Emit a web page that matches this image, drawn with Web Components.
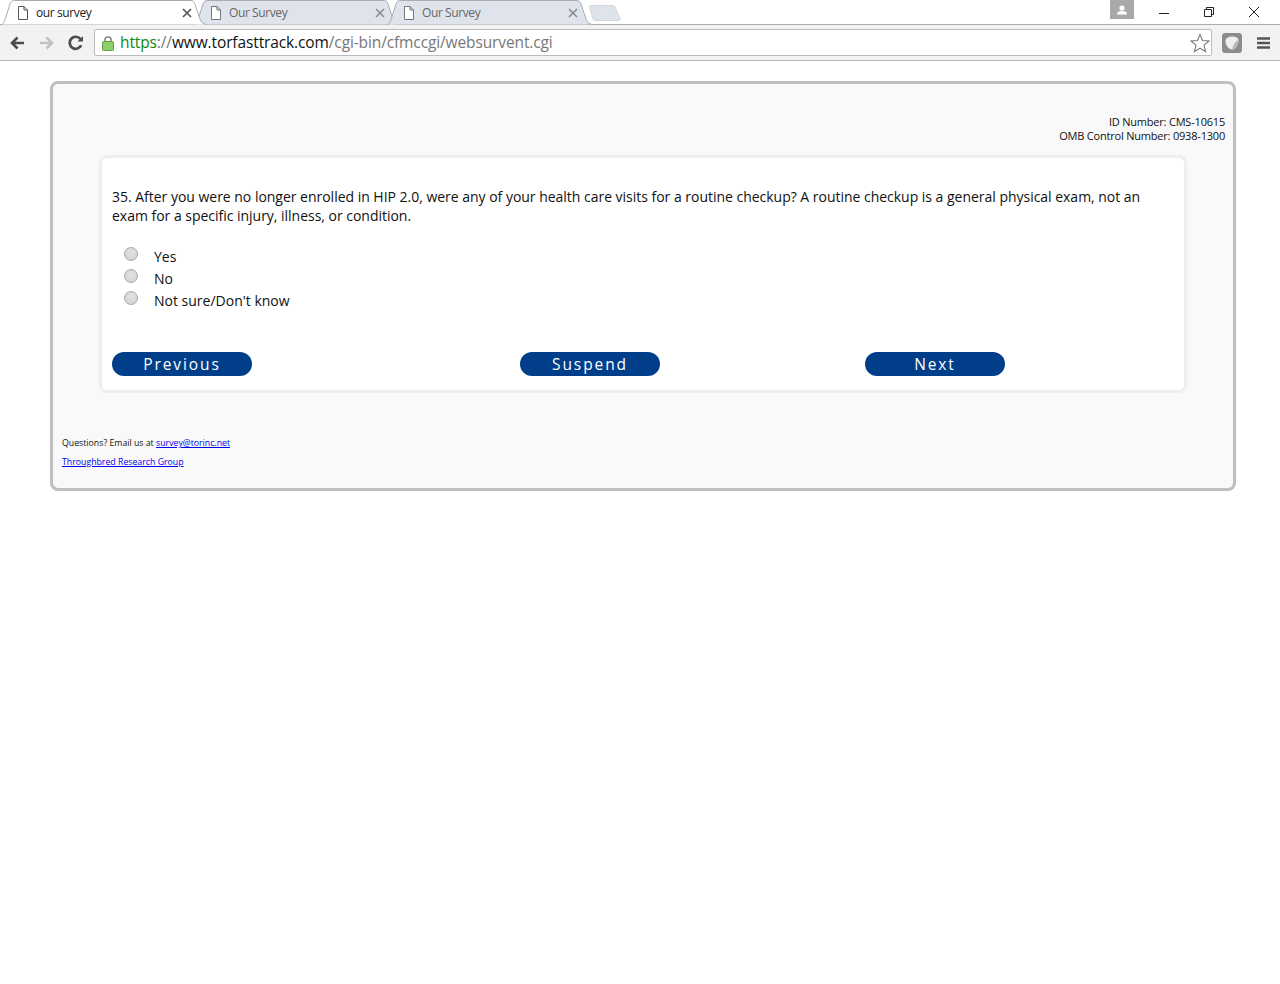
<!DOCTYPE html>
<html>
<head>
<meta charset="utf-8">
<title>our survey</title>
<style>
html, body { margin: 0; padding: 0; background: #fff; }
</style>
</head>
<body>
<browser-chrome>
	<browser-tab active label="our survey"></browser-tab>
	<browser-tab label="Our Survey"></browser-tab>
	<browser-tab label="Our Survey"></browser-tab>
</browser-chrome>
<survey-page>
	<span slot="id">ID Number: CMS-10615</span>
	<span slot="omb">OMB Control Number: 0938-1300</span>
	<survey-question>
		<span slot="text">35. After you were no longer enrolled in HIP 2.0, were any of your health care visits for a routine checkup? A routine checkup is a general physical exam, not an exam for a specific injury, illness, or condition.</span>
		<survey-option>Yes</survey-option>
		<survey-option>No</survey-option>
		<survey-option>Not sure/Don't know</survey-option>
		<survey-button slot="nav">Previous</survey-button>
		<survey-button slot="nav" style="margin-left:268px">Suspend</survey-button>
		<survey-button slot="nav" style="margin-left:205px">Next</survey-button>
	</survey-question>
</survey-page>
<script>
class BrowserTab extends HTMLElement {
	constructor(){
		super();
		this.attachShadow({mode: "open"});
	}
	connectedCallback(){
		const active = this.hasAttribute("active");
		const fill = active ? "#ffffff" : "#dfe4ec";
		const label = this.getAttribute("label");
		this.shadowRoot.innerHTML = `
			<style>
				:host {
					display: block;
					position: relative;
					width: 207px;
					height: 24px;
					margin-right: -14px;
					z-index: ${active ? 2 : 1};
				}
				svg.shape { position: absolute; left: 0; top: 0; }
				.inner {
					position: relative;
					display: flex;
					align-items: center;
					height: 24px;
					padding: 1px 15px 0 17px;
					box-sizing: border-box;
					font: 12px "Open Sans", "Noto Sans", sans-serif;
					color: ${active ? "#222" : "#666"};
				}
				.doc { margin-right: 7px; flex: none; }
				.label { flex: 1; white-space: nowrap; overflow: hidden; letter-spacing: -0.4px; }
				.close { flex: none; }
			</style>
			<svg class="shape" width="207" height="25" viewBox="0 0 207 25">
				<path d="M0.5 24.5 C4 24.5 4 22 5.5 18 L10 4 C11 1.5 12 0.5 15 0.5 L190 0.5 C193 0.5 194 1.5 195 4 L200 19 C201 22 203 24 206.5 24.5"
					fill="${fill}" stroke="#a9acb0"/>
			</svg>
			<div class="inner">
				<svg class="doc" width="12" height="14" viewBox="0 0 12 14">
					<path d="M1.5 0.5 H7 L10.5 4 V13.5 H1.5 Z M7 0.5 V4 H10.5" fill="#fff" stroke="${active ? "#555" : "#777"}"/>
				</svg>
				<span class="label">${label}</span>
				<svg class="close" width="10" height="10" viewBox="0 0 10 10">
					<path d="M1 1 L9 9 M9 1 L1 9" stroke="${active ? "#555" : "#8a8d92"}" stroke-width="1.7"/>
				</svg>
			</div>
		`;
	}
}
customElements.define("browser-tab", BrowserTab);

class BrowserChrome extends HTMLElement {
	constructor(){
		super();
		this.attachShadow({mode: "open"});
		this.shadowRoot.innerHTML = `
			<style>
				:host { display: block; font-family: "Open Sans", "Noto Sans", sans-serif; }
				#strip {
					display: flex;
					height: 24px;
					background: #fff;
					position: relative;
					padding-right: 3px;
				}
				#tabs { display: flex; }
				#newtab { margin: 5px 0 0 10px; flex: none; }
				#spacer { flex: 1; }
				#avatar {
					width: 24px; height: 19px; background: #a9a9a9;
					display: flex; align-items: center; justify-content: center;
					flex: none;
				}
				.win { width: 45px; height: 24px; display: flex; align-items: center; justify-content: center; flex: none; }
				.win:last-child { width: 46px; }
				#toolbar {
					display: flex;
					align-items: center;
					height: 37px;
					box-sizing: border-box;
					border-top: 1px solid #a9acb0;
					border-bottom: 1px solid #b4b4b4;
					background: #f2f2f2;
					position: relative;
				}
				.nav { flex: none; }
				#omnibox {
					flex: none;
					width: 1118px;
					height: 27px;
					margin-left: 10px;
					box-sizing: border-box;
					background: #fff;
					border: 1px solid #bcbcbc;
					border-radius: 2px;
					display: flex;
					align-items: center;
					font-size: 15.5px;
					white-space: nowrap;
					letter-spacing: -0.12px;
				}
				#lock { margin: 0 6px 0 7px; flex: none; }
				#url { flex: 1; color: #777; padding-bottom: 2px; }
				#url b { font-weight: normal; color: #0a8a0a; }
				#url i { font-style: normal; color: #111; }
				#star { margin-right: 1px; flex: none; }
			</style>
			<div id="strip">
				<div id="tabs"><slot></slot></div>
				<svg id="newtab" width="32" height="16" viewBox="0 0 32 16">
					<path d="M0.5 1.5 C0.5 0.8 1 0.5 2 0.5 H24 C25 0.5 25.5 1 26 2 L31 13.5 C31.3 14.5 31 15.5 29 15.5 H6 C5 15.5 4.5 15 4 14 Z" fill="#dfe4ec" stroke="#d3d6db"/>
				</svg>
				<div id="spacer"></div>
				<div id="avatar">
					<svg width="12" height="10" viewBox="0 0 12 10"><circle cx="6" cy="3" r="2.6" fill="#fff"/><path d="M1 9.5 C1 6.5 4 6 6 6 C8 6 11 6.5 11 9.5 Z" fill="#fff"/></svg>
				</div>
				<div style="width:7px;flex:none"></div>
				<div class="win"><svg width="12" height="12" viewBox="0 0 12 12"><path d="M1 7.5 H11" stroke="#222" stroke-width="1"/></svg></div>
				<div class="win"><svg width="12" height="12" viewBox="0 0 12 12"><path d="M1.5 3.5 H8.5 V10.5 H1.5 Z M3.5 3.5 V1.5 H10.5 V8.5 H8.5" fill="none" stroke="#222"/></svg></div>
				<div class="win"><svg width="12" height="12" viewBox="0 0 12 12"><path d="M1 1 L11 11 M11 1 L1 11" stroke="#222" stroke-width="1"/></svg></div>
			</div>
			<div id="toolbar">
				<svg class="nav" style="margin-left:9px" width="16" height="16" viewBox="0 0 16 16"><path d="M15 8 H4 M8.5 2.5 L3 8 L8.5 13.5" fill="none" stroke="#4d4d4d" stroke-width="2.6"/></svg>
				<svg class="nav" style="margin-left:14px" width="16" height="16" viewBox="0 0 16 16"><path d="M1 8 H12 M7.5 2.5 L13 8 L7.5 13.5" fill="none" stroke="#c2c2c2" stroke-width="2.6"/></svg>
				<svg class="nav" style="margin-left:13px" width="16" height="16" viewBox="0 0 16 16"><path d="M13.2 10.2 A6 6 0 1 1 12.4 4" fill="none" stroke="#4d4d4d" stroke-width="2.7"/><path d="M9.5 6.5 H15 V1 Z" fill="#4d4d4d"/></svg>
				<div id="omnibox">
					<svg id="lock" width="12" height="16" viewBox="0 0 12 16">
						<path d="M3 7 V4.5 C3 1 9 1 9 4.5 V7" fill="none" stroke="#777" stroke-width="1.4"/>
						<rect x="0.5" y="6.5" width="11" height="9" rx="1" fill="#8fd06a" stroke="#5f9a45"/>
					</svg>
					<span id="url"><b>https</b>://<i>www.torfasttrack.com</i>/cgi-bin/cfmccgi/websurvent.cgi</span>
					<svg id="star" width="20" height="20" viewBox="0 0 20 20"><path d="M10 1.5 L12.5 7.5 L19 8 L14 12.2 L15.6 18.6 L10 15.2 L4.4 18.6 L6 12.2 L1 8 L7.5 7.5 Z" fill="#fff" stroke="#7b7b7b" stroke-width="1.1"/></svg>
				</div>
				<svg class="nav" style="margin-left:10px" width="20" height="20" viewBox="0 0 20 20">
					<rect width="20" height="20" rx="3" fill="#8c8c8c"/>
					<path d="M3.5 8 C3.5 5 7 3.5 10 3.5 C13 3.5 16.5 4.5 16.5 7 C16.5 11.5 14 16 10 16.5 C6 16 3.5 12 3.5 8 Z" fill="#efefef"/>
					<path d="M16.5 7 C16.5 11.5 14 16 10 16.5 C11.5 12.5 12.5 9 16.5 7 Z" fill="#b8b8b8"/>
				</svg>
				<svg class="nav" style="margin-left:15px" width="14" height="14" viewBox="0 0 14 14"><path d="M0 2.5 H13 M0 7 H13 M0 11.5 H13" stroke="#555" stroke-width="2.4"/></svg>
			</div>
		`;
	}
}
customElements.define("browser-chrome", BrowserChrome);

class SurveyPage extends HTMLElement {
	constructor(){
		super();
		this.attachShadow({mode: "open"});
		this.shadowRoot.innerHTML = `
			<style>
				:host {
					display: block;
					box-sizing: border-box;
					width: 1186px;
					height: 410px;
					margin: 20px 0 0 50px;
					background: #f9f9f9;
					border: 3px solid #bfbfbf;
					border-radius: 8px;
					font-family: "Open Sans", "Noto Sans", sans-serif;
					color: #111;
				}
				#ids {
					padding: 31px 8px 0 0;
					text-align: right;
					font-size: 11px;
					line-height: 14px;
					letter-spacing: -0.2px;
				}
				#ids span { display: block; }
				#foot {
					margin: 45px 0 0 9px;
					font-size: 8.75px;
					line-height: 11px;
				}
				#foot div { margin-bottom: 8px; }
				a { color: #00e; }
			</style>
			<div id="ids">
				<span><slot name="id"></slot></span>
				<span><slot name="omb"></slot></span>
			</div>
			<slot></slot>
			<div id="foot">
				<div>Questions? Email us at <a href="#">survey@torinc.net</a></div>
				<div><a href="#">Throughbred Research Group</a></div>
			</div>
		`;
	}
}
customElements.define("survey-page", SurveyPage);

class SurveyQuestion extends HTMLElement {
	constructor(){
		super();
		this.attachShadow({mode: "open"});
		this.shadowRoot.innerHTML = `
			<style>
				:host {
					display: block;
					box-sizing: border-box;
					width: 1088px;
					height: 238px;
					margin: 12px 0 0 46px;
					padding: 29px 9px 0 10px;
					background: #fff;
					border: 3px solid #eeeeee;
					border-radius: 8px;
				}
				#text {
					font-size: 14px;
					line-height: 19px;
					width: 1050px;
					letter-spacing: -0.02px;
				}
				#options { margin-top: 21px; }
				#nav { display: flex; margin-top: 40px; }
			</style>
			<div id="text"><slot name="text"></slot></div>
			<div id="options"><slot></slot></div>
			<div id="nav"><slot name="nav"></slot></div>
		`;
	}
}
customElements.define("survey-question", SurveyQuestion);

class SurveyOption extends HTMLElement {
	constructor(){
		super();
		this.attachShadow({mode: "open"});
		this.shadowRoot.innerHTML = `
			<style>
				:host {
					display: flex;
					height: 22px;
					font-size: 14px;
					line-height: 22px;
				}
				#radio {
					box-sizing: border-box;
					width: 14px;
					height: 14px;
					margin: 1px 16px 0 12px;
					border-radius: 50%;
					border: 1px solid #a8a8a8;
					background: radial-gradient(circle at 50% 40%, #e2e2e2, #cfcfcf);
					flex: none;
				}
			</style>
			<div id="radio"></div>
			<slot></slot>
		`;
	}
}
customElements.define("survey-option", SurveyOption);

class SurveyButton extends HTMLElement {
	constructor(){
		super();
		this.attachShadow({mode: "open"});
		this.shadowRoot.innerHTML = `
			<style>
				:host {
					display: block;
					flex: none;
					width: 140px;
					height: 24px;
					border-radius: 12px;
					background: #003e8a;
					color: #fff;
					font-size: 15.5px;
					line-height: 25px;
					letter-spacing: 1.9px;
					text-align: center;
				}
			</style>
			<slot></slot>
		`;
	}
}
customElements.define("survey-button", SurveyButton);
</script>
</body>
</html>
